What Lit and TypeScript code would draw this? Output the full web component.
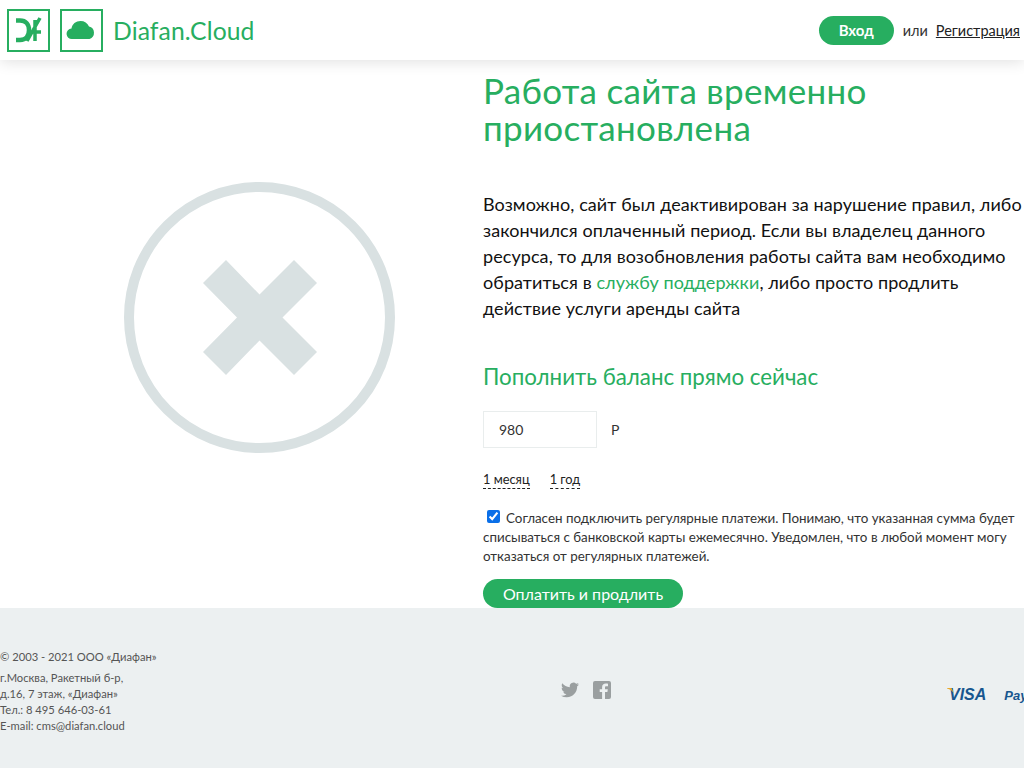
import { LitElement, html, css } from "lit";
import { customElement } from "lit/decorators.js";

@customElement("app-root")
export class AppRoot extends LitElement {
  static styles = css`
    :host { display: block; width: 1024px; height: 768px; overflow: hidden; font-family: "Lato", "Liberation Sans", sans-serif; color: #222; background: #fff; }
    * { box-sizing: border-box; }
    header { height: 60px; display: flex; align-items: center; padding: 0 4px 0 7px; box-shadow: 0 2px 14px rgba(0,0,0,.12); position: relative; z-index: 1; }
    .box { width: 43px; height: 43px; border: 2px solid #27ae60; display: block; margin-right: 10px; flex: none; }
    .brand { font-size: 24.700px; color: #27ae60; margin-right: auto; letter-spacing: .1px; }
    .login { width: 75px; height: 29px; border-radius: 15px; background: #27ae60; color: #fff; display: flex; align-items: center; justify-content: center; font-size: 15px; font-weight: 700; }
    .or { margin: 0 8px 0 9px; font-size: 14.5px; color: #333; }
    .reg { font-size: 14.5px; color: #222; text-decoration: underline; }
    main { height: 548px; display: flex; }
    .left { width: 483px; flex: none; padding: 122px 0 0 124px; }
    .right { flex: 1; padding-top: 12px; white-space: nowrap; }
    h1 { margin: 0 0 45px; font-size: 35px; line-height: 37px; font-weight: 400; color: #27ae60; letter-spacing: .3px; }
    p { margin: 0 0 42px; font-size: 18px; line-height: 26px; color: #111; letter-spacing: .08px; }
    p a { color: #27ae60; }
    h2 { margin: 0 0 20px; font-size: 22.3px; line-height: 28px; font-weight: 400; color: #27ae60; }
    .amount { display: flex; align-items: center; margin-bottom: 22px; font-size: 14px; color: #333; }
    .input { width: 114px; height: 37px; border: 1px solid #e9eded; display: flex; align-items: center; padding-left: 15px; margin-right: 14px; font-size: 14px; }
    .periods { display: flex; gap: 20px; font-size: 12.8px; margin-bottom: 20px; line-height: 18px; }
    .periods span { border-bottom: 1px dashed #222; }
    .agree { font-size: 13.4px; line-height: 19px; color: #333; margin-bottom: 13px; }
    .agree input { width: 13px; height: 13px; margin: 0 6px 0 4px; vertical-align: 0; accent-color: #0a6fe8; }
    .pay { width: 200px; height: 29px; border-radius: 15px; background: #27ae60; color: #fff; display: flex; align-items: center; justify-content: center; font-size: 16px; }
    footer { height: 160px; background: #ecf0f1; display: grid; grid-template-columns: 561px 388px 1fr; color: #555; font-size: 11.2px; overflow: hidden; }
    .addr { padding-top: 41px; line-height: 16px; }
    .addr div:first-child { margin-bottom: 5px; }
    .social { display: flex; gap: 14px; padding-top: 73px; align-items: flex-start; }
    .payments { display: flex; gap: 18px; padding-top: 78px; font-family: "Liberation Sans", sans-serif; font-style: italic; font-weight: 700; color: #17568f; white-space: nowrap; }
    .visa { font-size: 16px; position: relative; }
    .tick { position: absolute; left: -2px; top: 2px; }
    .paypal { font-size: 13px; padding-top: 2px; }
  `;

  render() {
    return html`
      <header>
        <svg class="box" viewBox="0 0 39 39" fill="none" stroke="#27ae60" stroke-width="4.500">
          <path d="M7 9.500h4c6 0 9 4 9 9.500s-3 10-9 10H7"/>
          <path d="M31 7 18 30M26 9v21M19 21h13" stroke-width="3.500"/>
        </svg>
        <svg class="box" viewBox="0 0 39 39" fill="#27ae60">
          <path d="M10 28a5.200 5.200 0 0 1-.5-10.400C10 13 14 10 18.500 10c4 0 7 2 8.500 5.500a6.500 6.500 0 0 1 .5 12.500Z" />
        </svg>
        <span class="brand">Diafan.Cloud</span>
        <span class="login">Вход</span>
        <span class="or">или</span>
        <a class="reg">Регистрация</a>
      </header>
      <main>
        <div class="left">
          <svg width="271" height="271" viewBox="0 0 271 271">
            <circle cx="135.5" cy="135.5" r="130.5" fill="none" stroke="#d9e1e2" stroke-width="10"/>
            <path fill="#d9e1e2" d="M102 78 135.500 112.500 170 78 193 101 158.500 135.500 193 170 170 193 135.500 158.500 102 193 79 170 113 135.500 79 101Z"/>
          </svg>
        </div>
        <div class="right">
          <h1>Работа сайта временно<br>приостановлена</h1>
          <p>Возможно, сайт был деактивирован за нарушение правил, либо<br>закончился оплаченный период. Если вы владелец данного<br>ресурса, то для возобновления работы сайта вам необходимо<br>обратиться в <a>службу поддержки</a>, либо просто продлить<br>действие услуги аренды сайта</p>
          <h2>Пополнить баланс прямо сейчас</h2>
          <div class="amount"><span class="input">980</span>Р</div>
          <div class="periods"><span>1 месяц</span><span>1 год</span></div>
          <div class="agree"><input type="checkbox" checked />Согласен подключить регулярные платежи. Понимаю, что указанная сумма будет<br>списываться с банковской карты ежемесячно. Уведомлен, что в любой момент могу<br>отказаться от регулярных платежей.</div>
          <div class="pay">Оплатить и продлить</div>
        </div>
      </main>
      <footer>
        <div class="addr">
          <div>© 2003 - 2021 ООО «Диафан»</div>
          <div>г.Москва, Ракетный б-р,</div>
          <div>д.16, 7 этаж, «Диафан»</div>
          <div>Тел.: 8 495 646-03-61</div>
          <div>E-mail: cms@diafan.cloud</div>
        </div>
        <div class="social">
          <svg width="18" height="18" viewBox="0 0 24 24" fill="#9a9fa0"><path d="M23.950 4.570a10 10 0 0 1-2.820.770 4.960 4.960 0 0 0 2.160-2.720c-.950.550-2 .950-3.130 1.180a4.920 4.920 0 0 0-8.380 4.480C7.690 8.090 4.070 6.130 1.640 3.160a4.820 4.820 0 0 0-.660 2.480c0 1.710.870 3.210 2.190 4.100a4.900 4.900 0 0 1-2.230-.620v.060a4.920 4.920 0 0 0 3.950 4.830 5 5 0 0 1-2.210.080 4.940 4.940 0 0 0 4.600 3.420A9.870 9.870 0 0 1 0 19.540a14 14 0 0 0 7.560 2.210c9.050 0 14-7.500 14-13.980 0-.210 0-.420-.020-.630a9.940 9.940 0 0 0 2.460-2.550Z"/></svg>
          <svg width="18" height="18" viewBox="0 0 18 18"><path fill="#9a9fa0" d="M2 0h14a2 2 0 0 1 2 2v14a2 2 0 0 1-2 2h-4v-7h2.400l.4-2.800H12V6.500c0-.8.300-1.300 1.400-1.300H15V2.700c-.4 0-1.200-.1-2.200-.1-2.200 0-3.700 1.300-3.700 3.700v1.900H6.700V11h2.400v7H2a2 2 0 0 1-2-2V2a2 2 0 0 1 2-2Z"/></svg>
        </div>
        <div class="payments"><span class="visa"><svg class="tick" width="7" height="6" viewBox="0 0 7 6"><path fill="#e9a92c" d="M0 0h4.500L7 5.500C5.500 3 3 1 0 .5Z"/></svg>VISA</span><span class="paypal">PayPal</span></div>
      </footer>
    `;
  }
}
